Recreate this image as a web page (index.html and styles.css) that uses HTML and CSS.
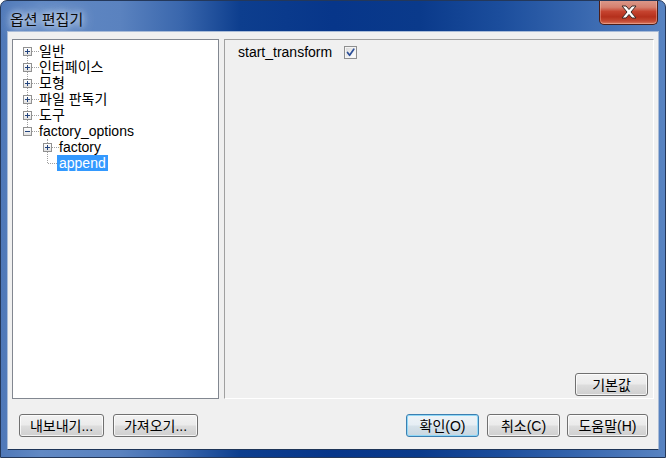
FILE: index.html
```html
<!DOCTYPE html>
<html lang="ko">
<head>
<meta charset="utf-8">
<title>옵션 편집기</title>
<link rel="stylesheet" href="styles.css">
</head>
<body>
<div class="window">
  <div class="titlebar">
    <span class="title">옵션 편집기</span>
    <div class="close">
      <svg width="16" height="14" viewBox="-1 -1 16 14"><polygon points="0,0 4,0 7,3.5 10,0 14,0 9,6 14,12 10,12 7,8.5 4,12 0,12 5,6" fill="#fff" stroke="#3a2a28" stroke-width="1" stroke-linejoin="round"/></svg>
    </div>
  </div>
  <div class="client">
    <div class="main">
      <ul class="tree">
        <li class="node root"><span class="exp line"><svg width="7" height="7" viewBox="0 0 7 7"><path d="M1 3.5h5M3.5 1v5" stroke="#24457e"/></svg></span><span class="dots"></span><span class="label">일반</span></li>
        <li class="node root"><span class="exp line"><svg width="7" height="7" viewBox="0 0 7 7"><path d="M1 3.5h5M3.5 1v5" stroke="#24457e"/></svg></span><span class="dots"></span><span class="label">인터페이스</span></li>
        <li class="node root"><span class="exp line"><svg width="7" height="7" viewBox="0 0 7 7"><path d="M1 3.5h5M3.5 1v5" stroke="#24457e"/></svg></span><span class="dots"></span><span class="label">모형</span></li>
        <li class="node root"><span class="exp line"><svg width="7" height="7" viewBox="0 0 7 7"><path d="M1 3.5h5M3.5 1v5" stroke="#24457e"/></svg></span><span class="dots"></span><span class="label">파일 판독기</span></li>
        <li class="node root"><span class="exp line"><svg width="7" height="7" viewBox="0 0 7 7"><path d="M1 3.5h5M3.5 1v5" stroke="#24457e"/></svg></span><span class="dots"></span><span class="label">도구</span></li>
        <li class="node root"><span class="exp"><svg width="7" height="7" viewBox="0 0 7 7"><path d="M1 3.5h5" stroke="#24457e"/></svg></span><span class="dots"></span><span class="label">factory_options</span></li>
        <li class="node child"><span class="exp up"><svg width="7" height="7" viewBox="0 0 7 7"><path d="M1 3.5h5M3.5 1v5" stroke="#24457e"/></svg></span><span class="dots"></span><span class="label">factory</span></li>
        <li class="node child"><span class="elbow"></span><span class="label sel">append</span></li>
      </ul>
      <div class="panel">
        <div class="opt">
          <span class="opt-label">start_transform</span>
          <span class="check"><svg width="11" height="11" viewBox="0 0 11 11"><path d="M2.5 5.5 L4.6 8.3 L8.8 2.2" fill="none" stroke="#2c4f98" stroke-width="1.7" stroke-linecap="round" stroke-linejoin="round"/></svg></span>
        </div>
        <button class="btn reset">기본값</button>
      </div>
    </div>
    <div class="btnrow">
      <button class="btn wide">내보내기...</button>
      <button class="btn wide gap9">가져오기...</button>
      <button class="btn std default push">확인(O)</button>
      <button class="btn std gap8">취소(C)</button>
      <button class="btn help gap7">도움말(H)</button>
    </div>
  </div>
</div>
</body>
</html>
```
FILE: styles.css
```css
html, body {
  margin: 0;
  padding: 0;
  background: #ffffff;
}
body {
  font-family: "Liberation Sans", "Noto Sans CJK KR", sans-serif;
  font-size: 14px;
  color: #000;
}
.window {
  width: 666px;
  height: 458px;
  box-sizing: border-box;
  border: 1px solid #24385a;
  border-radius: 7px 7px 0 0;
  background: linear-gradient(90deg, #4f78b8 0%, #6189c4 6%, #5a82bf 18%, #3a67ad 27%, #0d3e8e 36%, #07368a 50%, #0a3a8b 63%, #1b4d9c 75%, #3464ad 86%, #5883c1 100%);
  display: flex;
  flex-direction: column;
  overflow: hidden;
}
.titlebar {
  height: 30px;
  flex: none;
  display: flex;
  align-items: flex-start;
  padding-left: 9px;
}
.title {
  margin-top: 8px;
  line-height: 20px;
  font-family: "Noto Sans CJK KR", sans-serif;
  font-size: 15px;
  color: #0b0b0b;
  text-shadow: 0 0 6px rgba(255,255,255,.95), 0 0 12px rgba(220,232,248,.9), 0 0 18px rgba(200,220,245,.8);
}
.close {
  margin-left: auto;
  margin-right: 7px;
  margin-top: -1px;
  width: 59px;
  height: 25px;
  box-sizing: border-box;
  border: 1px solid #4b1e18;
  border-top: none;
  border-radius: 0 0 5px 5px;
  background: linear-gradient(#dc9b8d 0%, #d5806f 30%, #c5432f 48%, #b5301c 70%, #c34a33 88%, #dc7a5f 100%);
  box-shadow: inset 0 0 0 1px rgba(255,220,210,.35);
  display: flex;
  align-items: center;
  justify-content: center;
}
.close svg { display: block; }
.client {
  flex: 1;
  margin: 0 6px 7px;
  border: 1px solid;
  border-color: #a9bcd8 #a9bcd8 #1d3457 #a9bcd8;
  background: #f0f0f0;
  display: flex;
  flex-direction: column;
  padding: 7px 4px 0;
}
.main {
  display: flex;
  gap: 5px;
  height: 360px;
  flex: none;
}
.tree {
  list-style: none;
  margin: 0;
  width: 207px;
  box-sizing: border-box;
  border: 1px solid #828790;
  background: #fff;
  padding: 3px 0 0;
}
.node {
  display: flex;
  align-items: flex-start;
  height: 16px;
  line-height: 16px;
  white-space: nowrap;
}
.root { padding-left: 10px; }
.child { padding-left: 30px; }
.exp {
  position: relative;
  width: 9px;
  height: 9px;
  margin-top: 4px;
  box-sizing: border-box;
  border: 1px solid #919191;
  background: linear-gradient(#ffffff, #e2e2e2);
  flex: none;
}
.exp svg { display: block; }
.exp.line::after {
  content: "";
  position: absolute;
  left: 3px;
  top: 8px;
  height: 7px;
  border-left: 1px dotted #a0a0a0;
}
.exp.up::before {
  content: "";
  position: absolute;
  left: 3px;
  top: -5px;
  height: 4px;
  border-left: 1px dotted #a0a0a0;
}
.dots {
  width: 7px;
  margin-top: 8px;
  border-top: 1px dotted #a0a0a0;
  flex: none;
}
.elbow {
  position: relative;
  width: 14px;
  height: 16px;
  flex: none;
}
.elbow::before {
  content: "";
  position: absolute;
  left: 4px;
  top: -3px;
  height: 11px;
  border-left: 1px dotted #a0a0a0;
}
.elbow::after {
  content: "";
  position: absolute;
  left: 5px;
  top: 8px;
  width: 9px;
  border-top: 1px dotted #a0a0a0;
}
.label { padding: 0; }
.sel {
  background: #3399ff;
  color: #fff;
  padding: 0 2px;
}
.panel {
  flex: 1;
  box-sizing: border-box;
  border: 1px solid;
  border-color: #a0a0a0 #ffffff #ffffff #a0a0a0;
  display: flex;
  flex-direction: column;
}
.opt {
  display: flex;
  align-items: center;
  height: 16px;
  line-height: 16px;
  margin-top: 4px;
  padding-left: 13px;
}
.check {
  margin-left: 12px;
  width: 13px;
  height: 13px;
  box-sizing: border-box;
  border: 1px solid #8e8f8f;
  background: linear-gradient(135deg, #d6d6d6, #f6f6f6 70%, #fff);
  box-shadow: inset 0 0 0 1px #f4f4f4;
  display: flex;
  align-items: center;
  justify-content: center;
}
.check svg { display: block; }
.btn {
  height: 23px;
  box-sizing: border-box;
  margin: 0;
  padding: 0;
  border: 1px solid #707070;
  border-radius: 3px;
  background: linear-gradient(#f2f2f2 0%, #ebebeb 48%, #dddddd 52%, #cfcfcf 100%);
  box-shadow: inset 0 0 0 1px rgba(255,255,255,.75);
  font-family: "Liberation Sans", "Noto Sans CJK KR", sans-serif;
  font-size: 14px;
  line-height: 20px;
  color: #000;
  text-align: center;
  flex: none;
}
.reset {
  width: 73px;
  margin-top: auto;
  margin-right: 5px;
  margin-bottom: 2px;
  align-self: flex-end;
}
.btnrow {
  display: flex;
  margin-top: 15px;
  padding: 0 6px 0 7px;
}
.wide { width: 85px; }
.std { width: 73px; }
.help { width: 81px; }
.gap9 { margin-left: 9px; }
.gap8 { margin-left: 8px; }
.gap7 { margin-left: 7px; }
.push { margin-left: auto; }
.default {
  border-color: #3c7fb1;
  box-shadow: inset 0 0 0 1px #8fd8f7;
  background: linear-gradient(#eef4f8 0%, #e6eef4 48%, #d6e2ea 52%, #c8d6e0 100%);
}
```
